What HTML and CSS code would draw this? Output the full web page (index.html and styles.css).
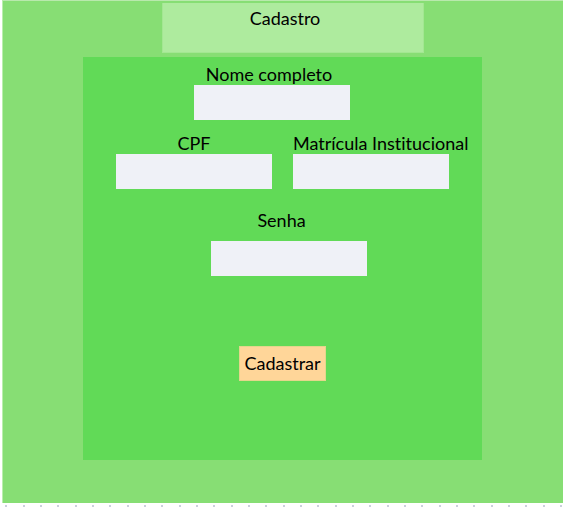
FILE: index.html
```html
<!DOCTYPE html>
<html lang="pt-BR">
<head>
<meta charset="utf-8">
<meta name="viewport" content="width=device-width, initial-scale=1">
<title>Cadastro</title>
<link rel="stylesheet" href="styles.css">
</head>
<body>
<main class="page">
  <header class="banner"><h1 class="title">Cadastro</h1></header>
  <form class="panel">
    <div class="row row-name">
      <div class="field">
        <label class="label label-name" for="nome">Nome completo</label>
        <input class="input" id="nome" type="text">
      </div>
    </div>
    <div class="row row-ids">
      <div class="field">
        <label class="label" for="cpf">CPF</label>
        <input class="input" id="cpf" type="text">
      </div>
      <div class="field">
        <label class="label label-start" for="matricula">Matrícula Institucional</label>
        <input class="input" id="matricula" type="text">
      </div>
    </div>
    <div class="row row-password">
      <div class="field field-spaced">
        <label class="label label-password" for="senha">Senha</label>
        <input class="input" id="senha" type="password">
      </div>
    </div>
    <div class="row row-action">
      <button class="button" type="submit">Cadastrar</button>
    </div>
  </form>
</main>
<div class="dots"></div>
</body>
</html>
```
FILE: styles.css
```css
* {
  box-sizing: border-box;
}

body {
  margin: 0;
  background: #fff;
  color: #000;
  font-family: Lato, "Liberation Sans", sans-serif;
  font-size: 18px;
  font-variant-ligatures: none;
  line-height: 22px;
}

.page {
  margin: 0 5px 0 2px;
  padding: 2px 0 43px;
  border-top: 1px solid #b9e9ad;
  border-left: 1px solid #b9efad;
  background: #87de74;
}

.banner {
  margin: 0 139px 4px 159px;
  padding: 4px 16px 23px 0;
  border: 1px solid #a3e792;
  border-top: 0;
  background: #aeeb9e;
  text-align: center;
}

.title {
  margin: 0;
  font-size: 18px;
  font-weight: 400;
}

.panel {
  margin: 0 81px 0 80px;
  padding: 6px 0 79px;
  background: #61da57;
}

.row {
  display: flex;
  justify-content: center;
}

.row-name {
  padding-right: 21px;
  margin-bottom: 12px;
}

.row-ids {
  gap: 21px;
  margin-bottom: 20px;
}

.row-password {
  padding-left: 12px;
  margin-bottom: 70px;
}

.field {
  display: flex;
  flex-direction: column;
  width: 156px;
}

.field-spaced {
  gap: 10px;
}

.label {
  text-align: center;
  white-space: nowrap;
}

.label-name {
  padding-right: 6px;
}

.label-password {
  padding-right: 14px;
}

.label-start {
  text-align: left;
}

.input {
  width: 100%;
  height: 35px;
  padding: 0 8px;
  border: 0;
  border-radius: 0;
  background: #eff1f7;
  color: inherit;
  font: inherit;
}

.button {
  height: 35px;
  padding: 0 4px 1px;
  border: 1px solid #e4d68c;
  border-radius: 0;
  background: #ffd699;
  color: inherit;
  font: inherit;
}

/* Row of grid dots below the canvas: three dots in each 52px tile. */
.dots {
  height: 2px;
  margin: 2px 5px 0;
  background: linear-gradient(90deg, #cbd0dd 2px, transparent 2px 18px, #cbd0dd 18px 20px, transparent 20px 35px, #cbd0dd 35px 37px, transparent 37px) 0 0 / 52px 2px;
}
```
